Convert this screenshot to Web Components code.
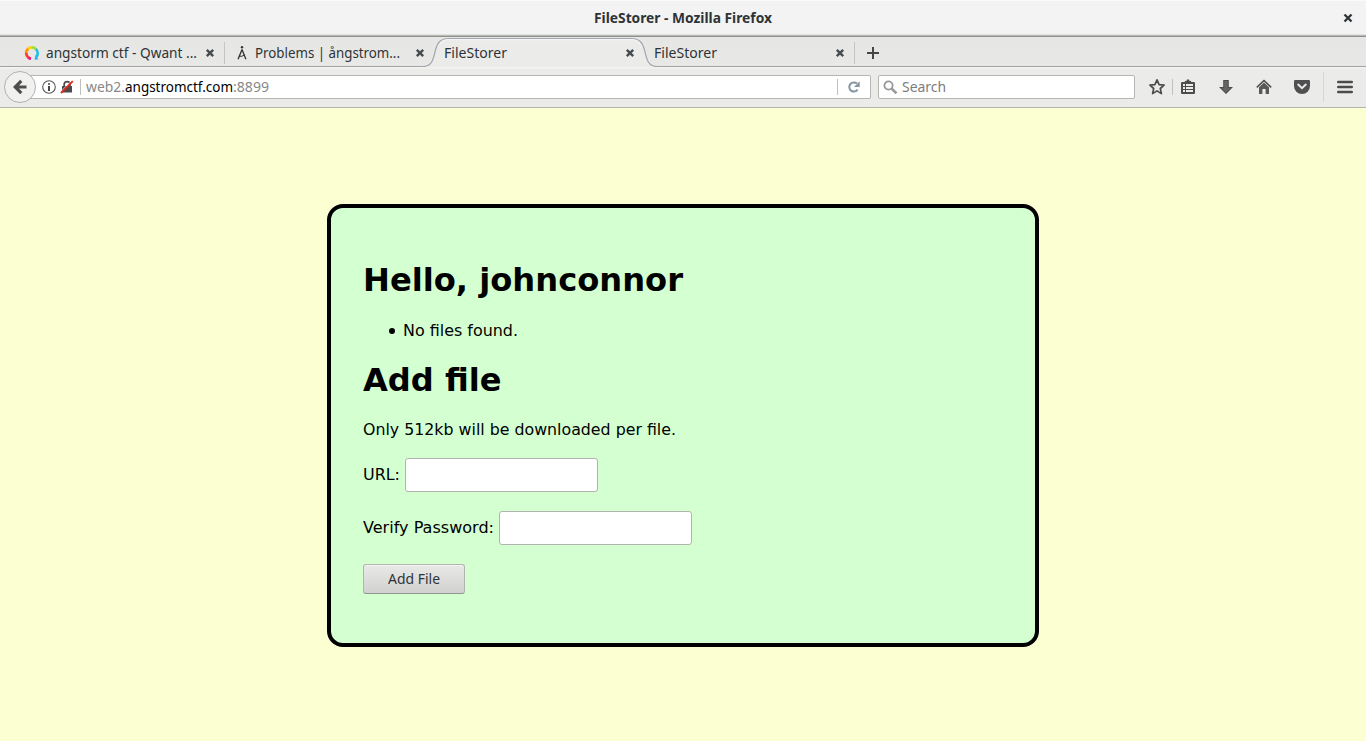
<!DOCTYPE html>
<html lang="en">
<head>
<meta charset="utf-8">
<title>FileStorer</title>
<style>
html,body{margin:0;height:100%;overflow:hidden}
body{font:15px/20px "Noto Sans","Open Sans",sans-serif;color:#2e3436}
</style>
</head>
<body>
<browser-window></browser-window>
<script>
const define = (name, html, setup) => {
  const t = document.createElement('template');
  t.innerHTML = html;
  customElements.define(name, class extends HTMLElement {
    connectedCallback() {
      if (this.shadowRoot) return;
      this.attachShadow({mode: 'open'}).append(t.content.cloneNode(true));
      if (setup) setup(this, this.shadowRoot);
    }
  });
};

// Text condensed to the given width.
define('fit-text', `<style>
:host{display:block;flex:none;white-space:pre;overflow:visible;padding-bottom:var(--lift,2px)}
span{display:inline-block;transform-origin:0 50%}
</style><span><slot></slot></span>`, (el, root) => {
  const w = +el.getAttribute('w'), s = root.querySelector('span');
  el.style.width = w + 'px';
  s.style.transform = `scaleX(${w / s.getBoundingClientRect().width})`;
});

const icons = {
  close: [10, 10, '<path d="M1.8 1.8 8.2 8.2M8.2 1.8 1.8 8.2" stroke="#474d4f" stroke-width="2.4" fill="none"/>'],
  winclose: [10, 10, '<path d="M1.5 1.5 8.5 8.5M8.5 1.5 1.5 8.5" stroke="#2e3436" stroke-width="2.3" fill="none"/>'],
  plus: [12, 12, '<path d="M6 0V12M0 6H12" stroke="#474747" stroke-width="2" fill="none"/>'],
  back: [16, 16, '<path d="M1 8 8.2 .8 10.4 3 7 6.4H14.5V9.6H7L10.4 13 8.2 15.2Z" fill="#4e4e4e"/>'],
  info: [14, 14, '<circle cx="7" cy="7" r="6.3" fill="none" stroke="#555" stroke-width="1.1"/><circle cx="7" cy="3.9" r="1" fill="#444"/><path d="M6 6H8V11H6Z" fill="#444"/>'],
  lock: [14, 14, '<path d="M4.2 6.5V4.5a2.9 2.9 0 0 1 5.8 0V6.5" fill="none" stroke="#4b4b4b" stroke-width="1.7"/><path d="M2 6H12V12.5H2Z" fill="#4b4b4b"/><path d="M.3 12.100 12 .4" stroke="#fff" stroke-width=".8"/><path d="M1 13 12.8 1.2" stroke="#dc2a22" stroke-width="1.9"/>'],
  reload: [12, 12, '<path d="M9.6 8.7A4.6 4.6 0 1 1 9 2.6" fill="none" stroke="#8796a4" stroke-width="2"/><path d="M11.7 .3V6H6Z" fill="#8796a4"/>'],
  search: [15, 15, '<circle cx="5.5" cy="5.5" r="4.1" fill="none" stroke="#999" stroke-width="1.8"/><path d="M8.6 8.6 13.5 13.3" stroke="#999" stroke-width="2.6"/>'],
  star: [18, 18, '<path d="M9 1.9 11.1 6.6 16.1 7.1 12.3 10.5 13.4 15.6 9 12.9 4.6 15.6 5.7 10.5 1.9 7.1 6.9 6.6Z" fill="none" stroke="#4c4c4c" stroke-width="1.7" stroke-linejoin="round"/>'],
  list: [16, 16, '<path d="M1 4.2Q1 3 2.2 3H4.6L5.2 2 6.7 1.8 7 .5H9L9.3 1.8 10.8 2 11.4 3H13.8Q15 3 15 4.2V13.8Q15 15 13.8 15H2.2Q1 15 1 13.8Z" fill="#4c4c4c"/><path d="M3 5H5V7H3ZM6 5H13V7H6ZM3 8H5V10H3ZM6 8H13V10H6ZM3 11H5V13H3ZM6 11H13V13H6Z" fill="#ebebea"/>'],
  down: [16, 16, '<path d="M5.2 1H10.8V8H15L8 15 1 8H5.2Z" fill="#4c4c4c"/><path d="M6.2 2H9.8V9H12.6L8 13.6 3.4 9H6.2Z" fill="#656565"/>'],
  home: [16, 16, '<path d="M.8 8.4 8 1.5 15.2 8.4" fill="none" stroke="#4c4c4c" stroke-width="1.5"/><path d="M3 8.3 8 3.6 13 8.3V15H9.6V10H6.4V15H3Z" fill="#595959"/>'],
  pocket: [18, 16, '<path d="M1 2.2Q1 1 2.2 1H15.8Q17 1 17 2.2V7A8 8 0 0 1 1 7Z" fill="#505050"/><path d="M5.2 5.6 9 9.2 12.8 5.6" fill="none" stroke="#ebebea" stroke-width="2" stroke-linecap="round"/>'],
  menu: [16, 14, '<path d="M1.2 2H14.8M1.2 7H14.8M1.2 12H14.8" stroke="#4c4c4c" stroke-width="2.4" stroke-linecap="round"/>'],
  qwant: [16, 16, '<g fill="none" stroke-width="2.7"><path d="M2.2 8.5A5.8 5.8 0 0 1 4.3 3.6" stroke="#ff9800"/><path d="M4.1 3.8A5.8 5.8 0 0 1 8 2.4" stroke="#ffd500"/><path d="M7.8 2.4A5.8 5.8 0 0 1 12.2 4.3" stroke="#a5dc30"/><path d="M12 4.1A5.8 5.8 0 0 1 12.2 12" stroke="#16bfe9"/><path d="M2.2 8.1A5.8 5.8 0 0 0 4.6 12.8" stroke="#ff3b28"/><path d="M4.4 12.6A5.8 5.8 0 0 0 7 13.7" stroke="#ee1681"/></g><path d="M11.500 10.800 14.500 14.500H10.500Z" fill="#25a8f0"/>'],
  compass: [12, 16, '<circle cx="6" cy="2.3" r="1.2" fill="#333"/><path d="M6 4.5 2.1 14.2M6 4.5 9.9 14.2" stroke="#333" stroke-width="1.3" fill="none"/><path d="M2.8 11.2Q6 12 8.8 9.8" stroke="#333" stroke-width="1" fill="none"/>']
};
define('ui-icon', `<style>:host{display:block;flex:none}svg{display:block}</style>`, (el, root) => {
  const [w, h, d] = icons[el.getAttribute('name')];
  root.innerHTML += `<svg width="${w}" height="${h}" viewBox="0 0 ${w} ${h}">${d}</svg>`;
});

define('title-bar', `<style>
:host{display:grid;grid-template-columns:1fr 178px 1fr;align-items:center;height:37px;box-sizing:border-box;background:linear-gradient(#fafafa 0 1px,#f3f3f3 1px 34px,#e1e1df 34px 35px,#b8bab5 35px 36px,#8e918b 36px);font-weight:700;padding-bottom:1px}
ui-icon{justify-self:end;margin-right:13px}
</style><i></i><fit-text w="178"><slot></slot></fit-text><ui-icon name="winclose"></ui-icon>`);

define('browser-tab', `<style>
:host{display:flex;position:relative;align-items:center;width:210px;height:30px;box-sizing:border-box;padding:2px 10px 0 9px;z-index:1}
:host([divider])::after{content:"";position:absolute;right:0;top:5px;width:1px;height:22px;background:#c4c4c2}
:host([active]){z-index:0}
.shape{display:none;position:absolute;left:-15px;top:0}
:host([active]) .shape{display:block}
::slotted(*){position:relative}
.icon{position:relative;display:flex}
.x{margin-left:auto;position:relative}
</style><svg class="shape" width="240" height="30" viewBox="0 0 240 30"><path d="M0 30V29.5H3C12 29.5 13.5 22 15.5 13C17.5 5 21 1.5 29 1.5H211C219 1.5 222.5 5 224.5 13C226.5 22 228 29.5 237 29.5H240V30Z" fill="#ebebea"/><path d="M0 29.5H3C12 29.5 13.5 22 15.5 13C17.5 5 21 1.5 29 1.5H211C219 1.5 222.5 5 224.5 13C226.5 22 228 29.5 237 29.5H240" fill="none" stroke="#a2a5ad" stroke-width="1.2"/><path d="M20 7C22 3.5 25 2.7 29 2.7H211C215 2.7 218 3.5 220 7" fill="none" stroke="#f8f8f8"/></svg>
<div class="icon"><slot name="icon"></slot></div><slot></slot><ui-icon class="x" name="close"></ui-icon>`);

define('tab-strip', `<style>
:host{display:flex;height:30px;padding-left:15px;background:linear-gradient(#e6e6e4,#e8e8e6 28px,#e3e3e1 29px,#a3a4a3 29px)}
.q{margin-right:6px}.c{margin:0 7px 0 2px}
.plus{margin:10px 0 0 12px}
</style>
<browser-tab divider><ui-icon slot="icon" class="q" name="qwant"></ui-icon><fit-text w="151">angstorm ctf - Qwant ...</fit-text></browser-tab>
<browser-tab><ui-icon slot="icon" class="c" name="compass"></ui-icon><fit-text w="145">Problems | ångstrom...</fit-text></browser-tab>
<browser-tab active><fit-text w="63">FileStorer</fit-text></browser-tab>
<browser-tab divider><fit-text w="63">FileStorer</fit-text></browser-tab>
<ui-icon class="plus" name="plus"></ui-icon>`);

define('nav-bar', `<style>
:host{display:flex;align-items:center;height:41px;box-sizing:border-box;padding-left:4px;border-bottom:1px solid #b4b4b0;background:linear-gradient(#f3f3f2 0 1px,#ebebea 2px)}
.back{width:32px;height:32px;box-sizing:border-box;border:1px solid #b1b1ae;border-radius:50%;background:#f1f1f0;display:grid;place-items:center;position:relative;z-index:1}
.field{display:flex;align-items:center;height:24px;box-sizing:border-box;border:1px solid #b5b5b1;border-radius:2px;background:#fff;color:#888}
.url{width:843px;margin-left:-8px;padding-left:13px;border-left:0}
.lock{margin:0 6px 0 4px}
.line{width:1px;height:16px;background:#c0c0be;flex:none}
.host{color:#000}
.url .r{margin-left:auto}
.reload{margin:0 10px 0 10px}
.search{width:257px;margin-left:7px;padding-left:4px;color:#7c7c7c}
.search fit-text{margin-left:4px}
.star{margin:0 6px 0 13px}
.list{margin:0 22px 0 7px}.home{margin:0 21px 0 22px}.end{height:30px;margin:0 13px 0 12px;background:#d5d5d3}
</style>
<div class="back"><ui-icon name="back"></ui-icon></div>
<div class="field url"><ui-icon name="info" style="margin-left:1px"></ui-icon><ui-icon class="lock" name="lock"></ui-icon><div class="line"></div><fit-text w="39" style="margin-left:5px">web2.</fit-text><fit-text class="host" w="108">angstromctf.com</fit-text><fit-text w="36">:8899</fit-text><div class="line r"></div><ui-icon class="reload" name="reload"></ui-icon></div>
<div class="field search"><ui-icon name="search"></ui-icon><fit-text w="44">Search</fit-text></div>
<ui-icon class="star" name="star"></ui-icon><div class="line"></div><ui-icon class="list" name="list"></ui-icon><ui-icon name="down"></ui-icon><ui-icon class="home" name="home"></ui-icon><ui-icon name="pocket"></ui-icon><div class="line end"></div><ui-icon name="menu"></ui-icon>`);

define('file-card', `<style>
:host{display:block;width:712px;height:443px;box-sizing:border-box;border:4px solid #000;border-radius:16px;background:#d4ffd0;padding:32px;color:#000;font:16px/19px "DejaVu Sans",sans-serif;--lift:0}
h1{font-size:32px;line-height:38px;margin:21px 0 22px}
ul{margin:0 0 21px;padding-left:26px;list-style:none}
li{display:flex;align-items:center;gap:8px}
li::before{content:"";width:6px;height:6px;border-radius:50%;background:#000}
p{margin:0 0 19px}
.row{display:flex;align-items:center;height:34px;margin-bottom:19px}
.row fit-text{--lift:1px}
input{width:193px;height:34px;box-sizing:border-box;border:1px solid #b3b3ae;border-radius:3px;background:#fff;margin:0 0 0 5px;outline:0}
h1+p{margin-top:-1px}
button{display:block;width:102px;height:30px;padding:0 0 1px 24px;text-align:left;border:1px solid #b1b5ae;border-bottom-color:#929590;border-radius:3px;background:linear-gradient(#e9e9e8,#d1d1d0);box-shadow:inset 0 1px #f5f5f4;font:15px/20px "Noto Sans",sans-serif;color:#2e3436;--lift:2px}
</style>
<h1><fit-text w="320">Hello, johnconnor</fit-text></h1><ul><li><fit-text w="115">No files found.</fit-text></li></ul>
<h1><fit-text w="138.500">Add file</fit-text></h1><p><fit-text w="313">Only 512kb will be downloaded per file.</fit-text></p>
<label class="row"><fit-text w="37">URL:</fit-text><input type="text"></label>
<label class="row"><fit-text w="131">Verify Password:</fit-text><input type="password"></label>
<button><fit-text w="52">Add File</fit-text></button>`);

define('browser-window', `<style>
:host{display:flex;flex-direction:column;height:100vh}
main{flex:1;background:#fcffd1;padding-top:96px;display:flex;justify-content:center;align-items:flex-start}
</style>
<title-bar>FileStorer - Mozilla Firefox</title-bar><tab-strip></tab-strip><nav-bar></nav-bar><main><file-card></file-card></main>`);
</script>
</body>
</html>
